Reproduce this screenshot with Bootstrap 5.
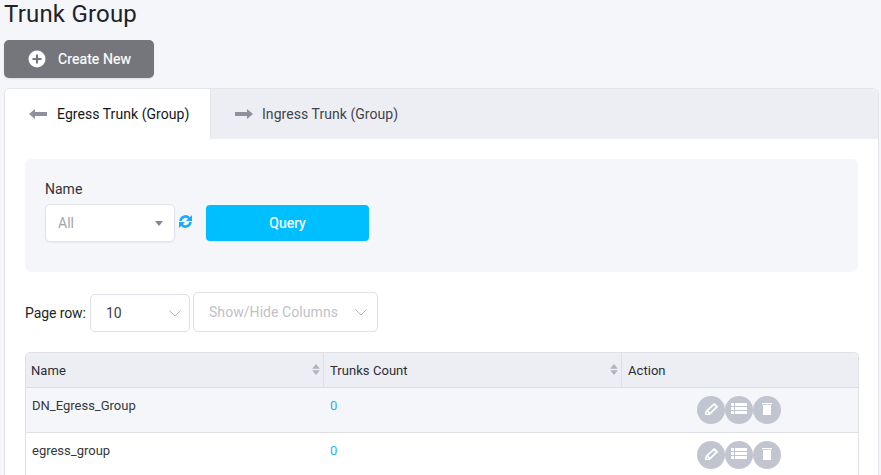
<!DOCTYPE html>
<html lang="en">
<head>
<meta charset="utf-8">
<title>Trunk Group</title>
<link href="https://cdn.jsdelivr.net/npm/bootstrap@5.3.0/dist/css/bootstrap.min.css" rel="stylesheet">
<style>
html,body{height:475px;overflow:hidden}
body{background:#f5f6f9;font-family:Roboto,"Liberation Sans",sans-serif;font-size:14px;color:#212529;padding:0 2px 0 4px}
.tg-title{font-size:24px;font-weight:400;line-height:28px;margin:0;height:40px;color:#1f2329;letter-spacing:.2px}
.tg-create{background:#74767b;color:#fff;border:0;border-radius:5px;width:150px;height:38px;font-size:14px;font-weight:400;padding:0 0 0 24px;gap:12px;box-shadow:0 1px 2px rgba(0,0,0,.1);letter-spacing:.1px;-webkit-text-stroke:.2px #fff}
.tg-panel{background:#fff;border:1px solid #e4e5ea;border-bottom:0;border-radius:6px 6px 0 0;margin-top:10px;height:400px;overflow:hidden}
.tg-tabs{background:#edeef3;height:50px;border-radius:6px 6px 0 0}
.tg-tab{height:50px;padding:0 0 0 24px;gap:9px;color:#40444d;font-size:14px;text-decoration:none;letter-spacing:.05px;white-space:nowrap}
.tg-tab.on{background:#fff;color:#14161c;border-right:1px solid #e4e5ea;width:206px;gap:10px}
.tg-body{padding:20px 20px 0 20px}
.tg-filter{background:#f5f6f9;border-radius:6px;height:113px;padding:21px 20px 0;width:833px}
.tg-label{font-size:14px;line-height:18px;margin-bottom:6px;color:#333}
.tg-sel{position:relative;width:130px;height:38px;background:#fff;border:1px solid #e2e3ea;border-radius:5px;padding-left:12px;color:#a3a5ab;font-size:14px;box-shadow:0 1px 2px rgba(0,0,0,.05)}
.tg-sel::after{content:"";position:absolute;right:11px;top:16px;border:4px solid transparent;border-top:5px solid #85878c;border-bottom:0}
.tg-query{background:#00bfff;color:#fff;border:0;width:163px;height:36px;border-radius:4px;font-weight:400;font-size:14px;margin-left:14px;padding:0;-webkit-text-stroke:.2px #fff}
.tg-rowbar{margin-top:21px;height:40px;gap:3px}
.tg-pagerow{letter-spacing:-.1px;width:62px}
.tg-drop{height:38px;background:#fff;border:1px solid #dfe0e8;border-radius:5px;font-size:14px}
.tg-pr{width:100px;padding:0 8px 0 15px;color:#3d4048}
.tg-cols{width:185px;height:40px;padding:0 10px 0 15px;color:#bfc1c7;margin-top:-2px;letter-spacing:.06px}
.tg-table{width:834px;margin-top:19px;border:1px solid #e0e1e6;border-bottom:0;border-radius:5px 5px 0 0;overflow:hidden}
.tg-cells{display:grid;grid-template-columns:298px 298px 1fr}
.tg-head{background:#edeef3;height:35px;border-bottom:1px solid #dfe0e5;color:#2a2d33}
.tg-head>div{padding-left:6px;position:relative;line-height:35px;border-right:1px solid #dfe0e5;height:34px;font-size:13px;letter-spacing:.05px}
.tg-head>div:first-child{padding-left:5px}
.tg-head>div:last-child{border-right:0}
.tg-sort{position:absolute;right:3px;top:11px;width:8px;height:11px}
.tg-row{height:45px;border-bottom:1px solid #dfe0e5;font-size:13px;color:#34373d}
.tg-row.alt{background:#f5f6f9}
.tg-row>div{padding:10px 0 0 6px;line-height:16px}
.tg-link{color:#1eb4f4;text-decoration:none}
.tg-acts{display:flex;padding:8px 0 0 75px !important}
.tg-act{width:28px;height:28px;border-radius:50%;background:#c1c5d0;flex:none;padding-bottom:3px}
</style>
</head>
<body>
<h1 class="tg-title">Trunk Group</h1>
<button type="button" class="btn tg-create d-flex align-items-center">
<svg width="18" height="18" viewBox="0 0 18 18"><circle cx="9" cy="9" r="8.500" fill="#fff"/><path d="M9 4.500v9M4.500 9h9" stroke="#74767b" stroke-width="2"/></svg>
<span>Create New</span></button>
<div class="tg-panel">
<div class="tg-tabs d-flex">
<a href="#" class="tg-tab on d-flex align-items-center"><svg width="18" height="10" viewBox="0 0 18 10"><path d="M0 5l6-5v3h12v4H6v3z" fill="#8e919c"/></svg><span>Egress Trunk (Group)</span></a>
<a href="#" class="tg-tab d-flex align-items-center"><svg width="18" height="10" viewBox="0 0 18 10"><path d="M18 5l-6-5v3H0v4h12v3z" fill="#8e919c"/></svg><span>Ingress Trunk (Group)</span></a>
</div>
<div class="tg-body">
<div class="tg-filter">
<div class="tg-label">Name</div>
<div class="d-flex align-items-center">
<div class="tg-sel d-flex align-items-center">All</div>
<svg class="ms-1 mb-1" width="13" height="13" viewBox="0 0 13 13" fill="none" stroke="#1eaaf5" stroke-width="2.600"><path d="M1.500 6A5 5 0 0 1 10.500 3.500"/><path d="M11.500 7A5 5 0 0 1 2.500 9.500"/><path d="M13 0v6H7z" fill="#1eaaf5" stroke="none"/><path d="M0 13V7h6z" fill="#1eaaf5" stroke="none"/></svg>
<button type="button" class="btn tg-query">Query</button>
</div>
</div>
<div class="tg-rowbar d-flex align-items-center">
<span class="text-nowrap tg-pagerow">Page row:</span>
<div class="tg-drop tg-pr d-flex align-items-center justify-content-between"><span>10</span><svg width="12" height="7" viewBox="0 0 12 7" fill="none" stroke="#b5b7c0"><path d="M.5 .5L6 6l5.500-5.500"/></svg></div>
<div class="tg-drop tg-cols d-flex align-items-center justify-content-between"><span>Show/Hide Columns</span><svg width="12" height="7" viewBox="0 0 12 7" fill="none" stroke="#b5b7c0"><path d="M.5 .5L6 6l5.500-5.500"/></svg></div>
</div>
<div class="tg-table">
<div class="tg-cells tg-head">
<div>Name<svg class="tg-sort" viewBox="0 0 9 13"><path d="M4.500 0L9 5.500H0zM4.500 13L0 7.500h9z" fill="#b1b3bb"/></svg></div>
<div>Trunks Count<svg class="tg-sort" viewBox="0 0 9 13"><path d="M4.500 0L9 5.500H0zM4.500 13L0 7.500h9z" fill="#b1b3bb"/></svg></div>
<div>Action</div>
</div>
<div class="tg-cells tg-row alt">
<div>DN_Egress_Group</div><div><a href="#" class="tg-link">0</a></div>
<div class="tg-acts">
<span class="tg-act d-flex align-items-center justify-content-center"><svg width="13" height="12" viewBox="0 0 14 13"><path d="M10 1l3 3-8 8-4.500 1L1.500 9zM3 9l2 2" fill="none" stroke="#fff" stroke-width="1.800"/></svg></span>
<span class="tg-act d-flex align-items-center justify-content-center"><svg width="16" height="11" viewBox="0 0 16 11"><path d="M0 0h3v3H0zM4 0h12v3H4zM0 4h3v3H0zM4 4h12v3H4zM0 8h3v3H0zM4 8h12v3H4z" fill="#fff"/></svg></span>
<span class="tg-act d-flex align-items-center justify-content-center"><svg width="10" height="12" viewBox="0 0 10 12"><path d="M0 0h10v1.200H0zM1 2h8v10H1z" fill="#fff"/></svg></span>
</div>
</div>
<div class="tg-cells tg-row">
<div>egress_group</div><div><a href="#" class="tg-link">0</a></div>
<div class="tg-acts">
<span class="tg-act d-flex align-items-center justify-content-center"><svg width="13" height="12" viewBox="0 0 14 13"><path d="M10 1l3 3-8 8-4.500 1L1.500 9zM3 9l2 2" fill="none" stroke="#fff" stroke-width="1.800"/></svg></span>
<span class="tg-act d-flex align-items-center justify-content-center"><svg width="16" height="11" viewBox="0 0 16 11"><path d="M0 0h3v3H0zM4 0h12v3H4zM0 4h3v3H0zM4 4h12v3H4zM0 8h3v3H0zM4 8h12v3H4z" fill="#fff"/></svg></span>
<span class="tg-act d-flex align-items-center justify-content-center"><svg width="10" height="12" viewBox="0 0 10 12"><path d="M0 0h10v1.200H0zM1 2h8v10H1z" fill="#fff"/></svg></span>
</div>
</div>
</div>
</div>
</div>
<script src="https://cdn.jsdelivr.net/npm/bootstrap@5.3.0/dist/js/bootstrap.bundle.min.js"></script>
</body>
</html>
